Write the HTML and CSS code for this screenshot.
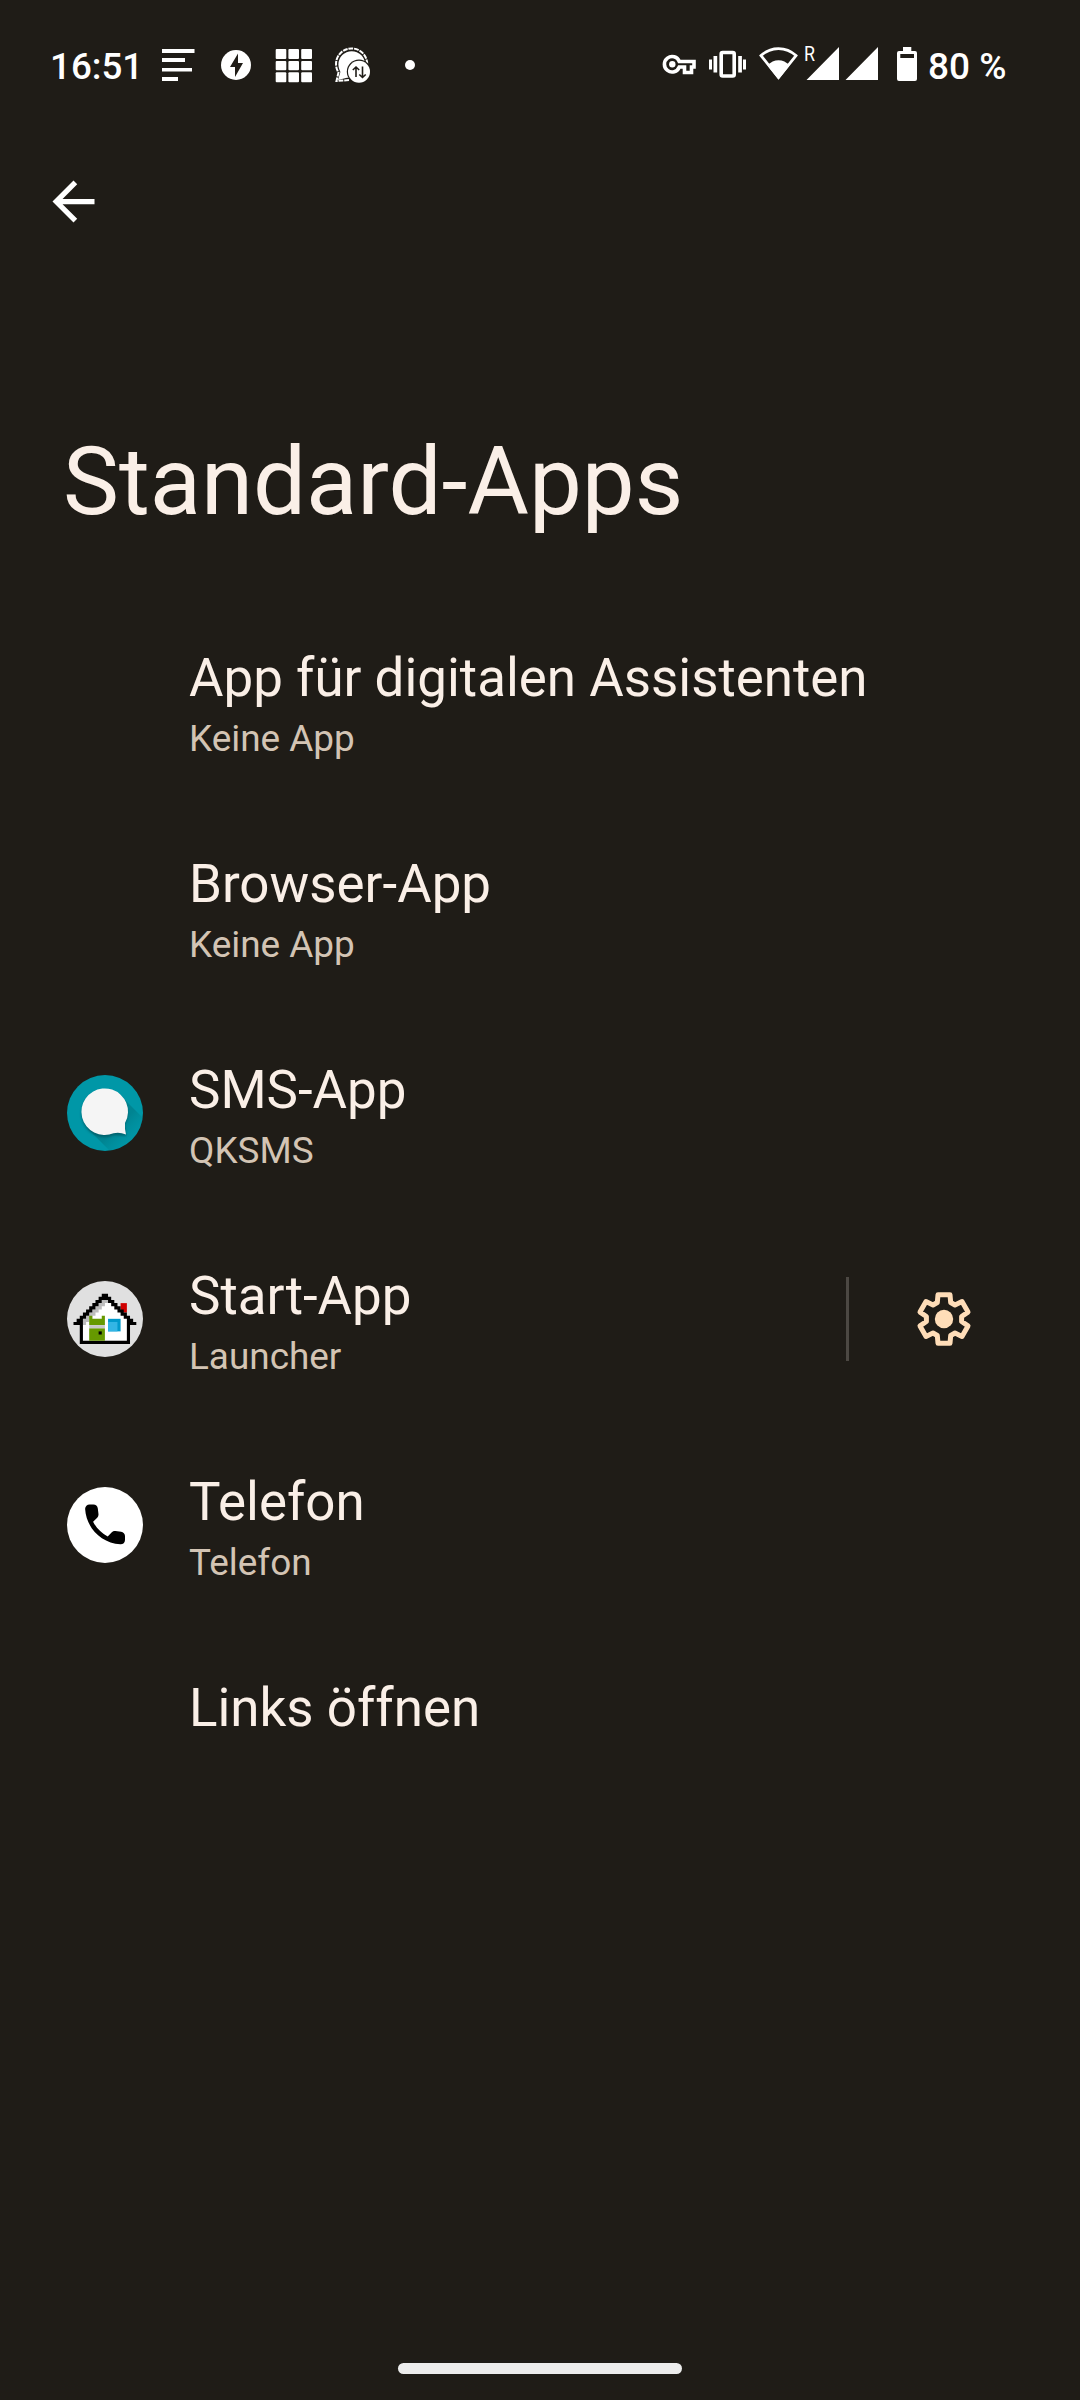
FILE: index.html
```html
<!DOCTYPE html>
<html lang="de">
<head>
<meta charset="utf-8">
<title>Standard-Apps</title>
<link rel="stylesheet" href="styles.css">
</head>
<body>
<div class="screen">
  <header class="status">
    <span class="clock">16:51</span>
    <svg class="tray" width="260" height="40" viewBox="160 45 260 40" fill="#fff">
      <path d="M162 49h32.500v4H162zM162 58h23v4h-23zM162 68h30v3.600h-30zM162 77h16v4h-16z"/>
      <circle cx="236" cy="65" r="15"/>
      <path fill="#1f1c17" d="M238 53.500L230 67h5v10l8-14h-5z"/>
      <g>
        <rect x="275.700" y="49" width="10.600" height="10" rx="1"/><rect x="288.400" y="49" width="10.600" height="10" rx="1"/><rect x="301.200" y="49" width="10.800" height="10" rx="1"/>
        <rect x="275.700" y="61" width="10.600" height="9.200" rx="1"/><rect x="288.400" y="61" width="10.600" height="9.200" rx="1"/><rect x="301.200" y="61" width="10.800" height="9.200" rx="1"/>
        <rect x="275.700" y="72.200" width="10.600" height="10" rx="1"/><rect x="288.400" y="72.200" width="10.600" height="10" rx="1"/><rect x="301.200" y="72.200" width="10.800" height="10" rx="1"/>
      </g>
      <circle cx="351.700" cy="64.500" r="13.300"/>
      <path d="M341 70l-3 10 12-3z"/>
      <path fill="none" stroke="#fff" stroke-width="2" stroke-dasharray="4.800 .9" d="M349 80l-12.500 1 2-8.500a15.600 15.600 0 1 1 28.500-6"/>
      <circle cx="359" cy="71.700" r="12.200" fill="#1f1c17"/>
      <circle cx="359" cy="71.700" r="11"/>
      <path fill="none" stroke="#1f1c17" stroke-width="1.600" d="M356 77V67m-3.200 3l3.200-3 3.200 3M362.500 66.500v11m-3.200-3l3.200 3 3.200-3"/>
      <circle cx="410" cy="65" r="5"/>
    </svg>
    <svg class="signals" width="260" height="60" viewBox="660 35 260 60" fill="#fff">
      <g fill="none" stroke="#fff" stroke-width="3.600">
        <path d="M679.300 61.500H694v5.500h-2.500v5.500h-7V67h-5.200a7.700 7.700 0 1 1 0-5.500z"/>
        <rect x="721.200" y="52.500" width="13" height="23.500" rx="1.500"/>
      </g>
      <circle cx="672.300" cy="64.300" r="3.200"/>
      <path d="M713.500 56h3.700v16.500h-3.700zM709 59.500h3v10h-3zM738.200 56h3.700v16.500h-3.700zM743 59.500h3v10h-3z"/>
      <path fill="none" stroke="#fff" stroke-width="2.800" d="M761 55.600C771 46.200 786 46.200 796 55.600L778.500 77.500z"/>
      <path d="M778.500 79.500L767.500 65.500c6-7 16-7 22 0z"/>
      <text class="roaming" x="804" y="61" textLength="11" lengthAdjust="spacingAndGlyphs">R</text>
      <path d="M839 47v33h-32.500zM878 47v33h-32.500z"/>
      <path fill-rule="evenodd" d="M903 47h8.300v4h3.700q2 0 2 2v26q0 2-2 2h-16q-2 0-2-2V53q0-2 2-2h4zM900.300 54v4H914v-4z"/>
    </svg>
    <span class="percent">80 %</span>
  </header>

  <nav class="toolbar">
    <svg width="63" height="63" viewBox="0 0 24 24" fill="#fff"><path d="M20 11H7.830l5.590-5.590L12 4l-8 8 8 8 1.410-1.410L7.830 13H20v-2z"/></svg>
  </nav>

  <h1 class="title">Standard-Apps</h1>

  <main class="list">
    <section class="row">
      <div class="icon"></div>
      <div class="label"><div class="name">App für digitalen Assistenten</div><div class="value">Keine App</div></div>
    </section>
    <section class="row">
      <div class="icon"></div>
      <div class="label"><div class="name">Browser-App</div><div class="value">Keine App</div></div>
    </section>
    <section class="row">
      <div class="icon">
        <svg width="76" height="76" viewBox="-38 -38 76 76">
          <defs>
            <clipPath id="disc"><circle r="38"/></clipPath>
            <linearGradient id="cast" x1="0" y1="0" x2="1" y2="1"><stop offset=".45" stop-color="#00717c" stop-opacity=".5"/><stop offset=".75" stop-color="#0097a7" stop-opacity="0"/></linearGradient>
            <filter id="soft" x="-20%" y="-20%" width="150%" height="150%"><feGaussianBlur stdDeviation="1.300"/></filter>
          </defs>
          <circle r="38" fill="#0097a7"/>
          <path clip-path="url(#disc)" fill="url(#cast)" d="M-17 16L16-17 50 17 17 50z"/>
          <path filter="url(#soft)" fill="#004d56" fill-opacity=".6" transform="translate(0 1.500)" d="M23-.5a23.300 23.300 0 1 0-14 21.300l12.300.8-1.700-11.500A23 23 0 0 0 23-.5z"/>
          <path fill="#f5f5f5" d="M23-.5a23.300 23.300 0 1 0-14.500 20.800q6-1.500 12.500 1.200-1.500-6-1-11.500A23 23 0 0 0 23-.5z"/>
        </svg>
      </div>
      <div class="label"><div class="name">SMS-App</div><div class="value">QKSMS</div></div>
    </section>
    <section class="row">
      <div class="icon">
        <svg width="76" height="76" viewBox="-38 -38 76 76">
          <circle r="38" fill="#e0e0e0"/>
          <g transform="translate(-31.500 -25.300) scale(3.140)">
            <path fill="#d00000" d="M15 3h2v3h-2z"/>
            <path fill="#fff" d="M9 1h2v1h1v1h1v1h1v1h1v1h1v1h1v8H3V7h1V6h1V5h1V4h1V3h1V2h1z"/>
            <path fill="#bdbdbd" d="M9 2h2v1h-1v1H9v1H8v1H7v1H6v1H5v1H4v1H3V8h1V7h1V6h1V5h1V4h1V3h1z"/>
            <path fill="#000" d="M9 0h2v1h1v1h1v1h1v1h1v1h1v1h1v1h1v1h1v1h1v1h-2v6H2v-6H0V9h1V8h1V7h1V6h1V5h1V4h1V3h1V2h1V1h1zM9 2v1H8v1H7v1H6v1H5v1H4v1H3v7h14V8h-1V7h-1V6h-1V5h-1V4h-1V3h-1V2z" fill-rule="evenodd"/>
            <path fill="#669900" d="M5 7h1v1h3V7h1v3H5zM5 11h5v4H5z"/>
            <path fill="#c8c8c8" d="M5 10h5v1H5z"/>
            <path fill="#000" d="M8 12h1v1H8z"/>
            <path fill="#0099cc" d="M11 8h4v4h-4z"/>
            <path fill="#33b5e5" d="M11 9h3v3h-3z"/>
          </g>
        </svg>
      </div>
      <div class="label"><div class="name">Start-App</div><div class="value">Launcher</div></div>
      <div class="action">
        <svg width="56" height="56" viewBox="-28 -28 56 56">
          <path fill="none" stroke="#ffddb8" stroke-width="5" stroke-linejoin="round" d="M-6-24.300H6L6.700-16.500 11-14 18-17.400 24-6.900 17.600-2.500v5L24 6.900 18 17.400 11 14 6.700 16.500 6 24.300H-6L-6.700 16.500-11 14-18 17.400-24 6.900-17.600 2.500v-5L-24-6.900-18-17.400-11-14-6.700-16.500z"/>
          <circle r="9.200" fill="#ffddb8"/>
        </svg>
      </div>
    </section>
    <section class="row">
      <div class="icon">
        <svg width="76" height="76" viewBox="-38 -38 76 76">
          <circle r="38" fill="#fff"/>
          <path transform="translate(-26.600 -27.200) scale(2.220)" d="M19.230 15.260l-2.540-.29c-.61-.07-1.210.14-1.640.57l-1.840 1.840c-2.830-1.440-5.150-3.750-6.590-6.590l1.850-1.850c.43-.43.64-1.030.57-1.640l-.29-2.520c-.12-1.010-.97-1.770-1.990-1.770H5.030c-1.130 0-2.070.94-2 2.070.53 8.540 7.360 15.360 15.890 15.890 1.130.07 2.070-.87 2.070-2v-1.730c.01-1.010-.75-1.860-1.760-1.980z"/>
        </svg>
      </div>
      <div class="label"><div class="name">Telefon</div><div class="value">Telefon</div></div>
    </section>
    <section class="row">
      <div class="icon"></div>
      <div class="label"><div class="name">Links öffnen</div></div>
    </section>
  </main>

  <footer class="navbar"><div class="handle"></div></footer>
</div>
</body>
</html>
```
FILE: styles.css
```css
* { box-sizing: border-box; }
body {
  margin: 0;
  background: #1f1c17;
  font-family: Roboto, sans-serif;
}
.screen {
  width: 1080px;
  height: 2400px;
  display: flex;
  flex-direction: column;
  color: #faefe7;
  white-space: nowrap;
}
.status {
  height: 130px;
  padding-left: 50px;
  display: flex;
  align-items: center;
  color: #fff;
  font-size: 37px;
  font-weight: 500;
}
.clock {
  width: 110px;
  padding-top: 3px;
  font-size: 36.750px;
}
.signals { margin-left: 240px; }
.roaming { font-size: 20.500px; font-weight: 400; }
.percent { padding: 3px 0 0 8px; }
.toolbar {
  height: 144px;
  padding: 40px 0 0 42px;
}
.toolbar svg { display: block; }
.title {
  height: 324px;
  margin: 0;
  padding: 152px 0 0 63px;
  font-size: 94.200px;
  line-height: 112px;
  font-weight: 400;
}
.list {
  flex: 1;
  display: flex;
  flex-direction: column;
}
.row {
  height: 206px;
  padding-left: 67px;
  display: flex;
  align-items: center;
}
.icon {
  width: 122px;
  height: 76px;
}
.icon svg { display: block; }
.label {
  flex: 1;
  height: 206px;
  padding-top: 49px;
}
.name {
  font-size: 52.900px;
  line-height: 62px;
}
.value {
  margin-top: 8px;
  font-size: 36.900px;
  line-height: 44px;
  color: #d3c4b4;
}
.action {
  width: 234px;
  height: 84px;
  padding-left: 66.500px;
  display: flex;
  align-items: center;
  border-left: 3px solid #4c4843;
}
.navbar {
  height: 50px;
  padding-top: 13px;
}
.handle {
  width: 284px;
  height: 11px;
  margin: 0 auto;
  border-radius: 6px;
  background: #ececec;
}
```
